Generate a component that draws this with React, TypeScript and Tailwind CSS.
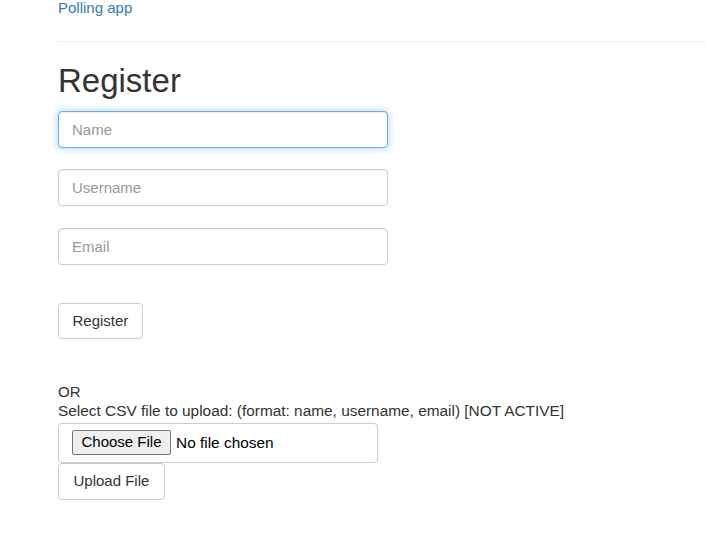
import React from 'react';

const fieldClass =
  'block w-[330px] h-[37px] px-[13px] rounded-[4px] border border-[#ccc] bg-white text-[15px] text-[#555] placeholder:text-[#999] outline-none shadow-[inset_0_1px_1px_rgba(0,0,0,0.075)]';

export default function App() {
  return (
    <div
      className="min-h-[541px] bg-white text-[#333] text-[15px]"
      style={{ fontFamily: '"Liberation Sans", Arial, sans-serif' }}
    >
      {/* Top bar */}
      <div className="pl-[58px] h-[41px]">
        <a href="#" className="block leading-[15px] text-[15px] text-[#337ab7]">
          Polling app
        </a>
      </div>
      <div className="ml-[58px] border-t border-[#eee]" />

      <div className="pl-[58px]">
        <h1 className="mt-[19px] text-[33px] leading-[40px] font-normal text-[#333]">Register</h1>

        <form className="mt-[10px]" onSubmit={(e) => e.preventDefault()}>
          <input
            type="text"
            placeholder="Name"
            className={`${fieldClass} !border-[#66afe9] !shadow-[inset_0_1px_1px_rgba(0,0,0,0.075),0_0_8px_rgba(102,175,233,0.6)]`}
          />
          <input type="text" placeholder="Username" className={`${fieldClass} mt-[21px]`} />
          <input type="email" placeholder="Email" className={`${fieldClass} mt-[22px]`} />

          <button
            type="submit"
            className="mt-[38px] block h-[36px] px-[13.5px] rounded-[4px] border border-[#ccc] bg-white text-[15px] text-[#333]"
          >
            Register
          </button>
        </form>

        <div className="mt-[43px] leading-[19px]">
          <div>OR</div>
          <div className="text-[15.4px]">Select CSV file to upload: (format: name, username, email) [NOT ACTIVE]</div>
        </div>

        <div className="mt-[3px] w-[320px] h-[40px] rounded-[4px] border border-[#ccc] bg-white pl-[13px] pt-[6px] flex items-start gap-[5px]">
          <span className="h-[25px] px-[8.5px] flex items-center rounded-[2px] border border-[#767676] bg-[#efefef] text-[15px] text-black">
            Choose File
          </span>
          <span className="h-[25px] flex items-center text-[15.4px] text-black">No file chosen</span>
        </div>

        <button
          type="button"
          className="block h-[37px] px-[14.5px] rounded-[4px] border border-[#ccc] bg-white text-[15px] text-[#333]"
        >
          Upload File
        </button>
      </div>
    </div>
  );
}
